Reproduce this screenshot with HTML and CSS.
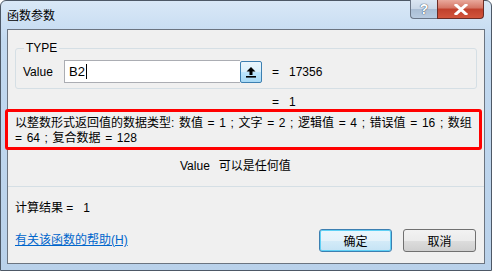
FILE: index.html
```html
<!DOCTYPE html>
<html lang="zh-CN">
<head>
<meta charset="utf-8">
<title>函数参数</title>
<link rel="stylesheet" href="styles.css">
</head>
<body>
<div class="window">
  <div class="titlebar">
    <span class="title">函数参数</span>
    <div class="caption-btns">
      <span class="cap-btn help">?</span>
      <span class="cap-btn close">
        <svg width="14" height="11" viewBox="0 0 14 11"><path d="M2 1 L12 10 M12 1 L2 10" stroke="#fff" stroke-width="3" stroke-linecap="square"/></svg>
      </span>
    </div>
  </div>
  <div class="client">
    <fieldset class="group">
      <legend>TYPE</legend>
      <div class="arg-row">
        <span class="arg-label">Value</span>
        <div class="input"><span>B2</span><span class="caret"></span></div>
        <span class="ref-btn">
          <svg width="12" height="12" viewBox="0 0 12 12"><path d="M6 1 L10.5 5.5 H7.5 V9 H4.5 V5.5 H1.5 Z" fill="#000"/><rect x="1" y="10" width="10" height="1.6" fill="#000"/></svg>
        </span>
        <span class="eq">=</span><span class="val">17356</span>
      </div>
    </fieldset>
    <div class="fn-result"><span class="eq">=</span><span class="val">1</span></div>
    <div class="desc">以整数形式返回值的数据类型: 数值 = 1 ; 文字 = 2 ; 逻辑值 = 4 ; 错误值 = 16 ; 数组 = 64 ; 复合数据 = 128</div>
    <div class="arg-desc"><span class="arg-name">Value</span>可以是任何值</div>
    <div class="sep"></div>
    <div class="calc">计算结果 =<span class="calc-val">1</span></div>
    <div class="footer">
      <a class="help-link" href="#">有关该函数的帮助(H)</a>
      <div class="buttons">
        <button class="btn primary">确定</button>
        <button class="btn">取消</button>
      </div>
    </div>
  </div>
</div>
</body>
</html>
```

FILE: styles.css
```css
html, body {
  margin: 0;
  padding: 0;
  background: #ffffff;
}
body {
  font-family: "Liberation Sans", "Noto Sans CJK SC", sans-serif;
  font-size: 12px;
  color: #000;
}
.window {
  width: 492px;
  height: 271px;
  box-sizing: border-box;
  border: 1px solid #4d5866;
  border-radius: 6px 6px 0 0;
  background: linear-gradient(180deg, #d9e8f7 0%, #c2d9f0 15%, #b9d1ea 100%);
  padding: 0 6px 6px 6px;
  display: flex;
  flex-direction: column;
}
.titlebar {
  height: 28px;
  display: flex;
  align-items: flex-start;
  justify-content: space-between;
  flex: none;
}
.title {
  margin-top: 6px;
  font-family: "Noto Sans CJK SC", sans-serif;
  font-size: 12px;
  line-height: 16px;
  color: #000;
}
.caption-btns {
  display: flex;
  margin-top: -1px;
  margin-right: 1px;
}
.cap-btn {
  height: 19px;
  display: flex;
  align-items: center;
  justify-content: center;
  box-sizing: border-box;
  border: 1px solid #6a7687;
  border-top: none;
}
.help {
  width: 27px;
  border-radius: 0 0 0 4px;
  background: linear-gradient(180deg, #dbe6f2 0%, #c9d7e7 50%, #a9bdd4 51%, #b8cbe0 100%);
  color: #fff;
  font-weight: bold;
  font-size: 14px;
  text-shadow: 0 0 1px #3a4a5e, 0 0 1px #3a4a5e;
  border-right: none;
}
.close {
  width: 47px;
  border-radius: 0 0 4px 0;
  background: linear-gradient(180deg, #e9a99c 0%, #d47463 45%, #c0402c 50%, #d2553c 100%);
  border-color: #6b2c25;
}
.client {
  flex: 1;
  border: 1px solid #6b7480;
  background: #f0f0f0;
  padding: 0 7px 0 7px;
  display: flex;
  flex-direction: column;
}
.group {
  margin: 11px 0 0 0;
  padding: 5px 7px 5px 7px;
  border: 1px solid #d5dfe5;
  border-radius: 3px;
  min-width: 0;
}
.group legend {
  padding: 0 2px;
  margin-left: 1px;
  line-height: 14px;
}
.arg-row {
  display: flex;
  align-items: center;
}
.arg-label {
  width: 41px;
}
.input {
  width: 171px;
  height: 21px;
  border: 1px solid #abadb3;
  border-right: none;
  background: #fff;
  display: flex;
  align-items: center;
  padding-left: 4px;
  font-size: 13px;
}
.caret {
  width: 1px;
  height: 15px;
  background: #000;
  margin-left: 1px;
}
.ref-btn {
  width: 20px;
  height: 20px;
  border: 1px solid #3c7fb1;
  border-radius: 2px;
  background: linear-gradient(180deg, #eaf6fd 0%, #d9f0fc 50%, #bee6fd 51%, #a7d9f5 100%);
  display: flex;
  align-items: center;
  justify-content: center;
}
.eq {
  margin-left: 10px;
  width: 17px;
}
.val {
  color: #000;
}
.fn-result {
  display: flex;
  padding-left: 247px;
  margin-top: 6px;
  line-height: 14px;
}
.desc {
  margin: 0 0 0 -10px;
  border: 3px solid #ff0000;
  border-radius: 3px;
  padding: 4px 4px 1px 7px;
  line-height: 15px;
  word-spacing: 1.3px;
  width: 477px;
  box-sizing: border-box;
}
.arg-desc {
  margin-top: 9px;
  padding-left: 165px;
  line-height: 15px;
}
.arg-name {
  margin-right: 9px;
}
.sep {
  height: 1px;
  background: #d5dfe5;
  margin: 12px -7px 0 -7px;
}
.calc {
  margin-top: 14px;
  line-height: 15px;
}
.calc-val {
  margin-left: 10px;
}
.footer {
  display: flex;
  align-items: center;
  justify-content: space-between;
  margin-top: 13px;
}
.help-link {
  color: #0066cc;
  text-decoration: underline;
  line-height: 15px;
}
.buttons {
  display: flex;
  gap: 11px;
  margin-right: 1px;
}
.btn {
  width: 73px;
  height: 23px;
  font-family: "Noto Sans CJK SC", sans-serif;
  font-size: 12px;
  border: 1px solid #707070;
  border-radius: 3px;
  background: linear-gradient(180deg, #f2f2f2 0%, #ebebeb 50%, #dddddd 51%, #cfcfcf 100%);
  padding: 0;
  color: #000;
}
.btn.primary {
  border-color: #3c7fb1;
  box-shadow: inset 0 0 0 1px #5fd0f5;
  background: linear-gradient(180deg, #eaf6fd 0%, #e4f2fa 50%, #d4ebf8 51%, #c5e3f5 100%);
}
```
